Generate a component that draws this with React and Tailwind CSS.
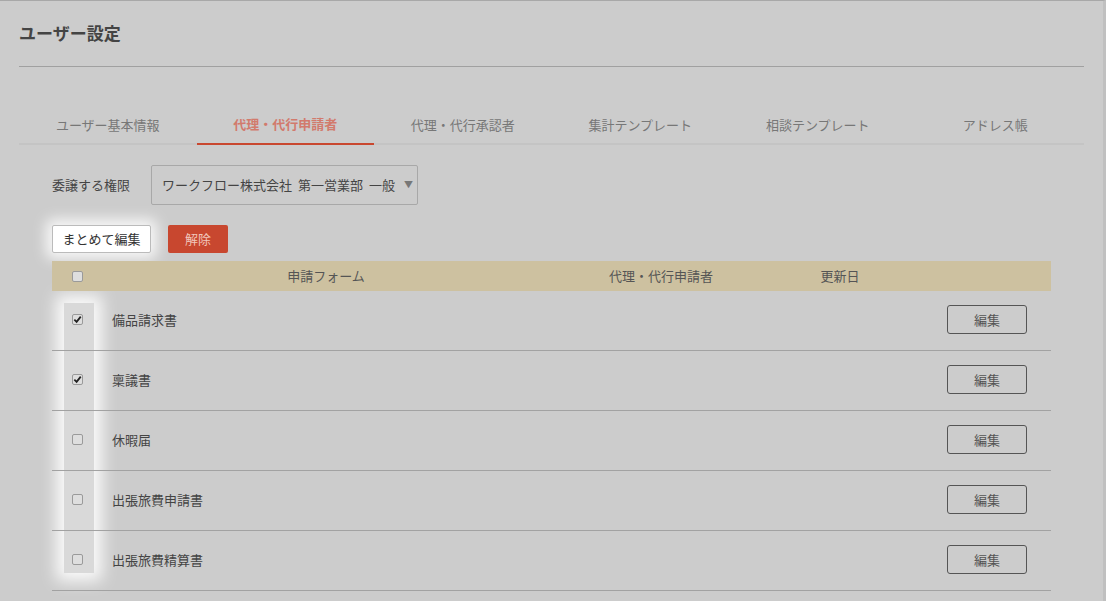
import { useState } from "react";

const tabs = [
  "ユーザー基本情報",
  "代理・代行申請者",
  "代理・代行承認者",
  "集計テンプレート",
  "相談テンプレート",
  "アドレス帳",
];

const forms = [
  { name: "備品請求書", checked: true },
  { name: "稟議書", checked: true },
  { name: "休暇届", checked: false },
  { name: "出張旅費申請書", checked: false },
  { name: "出張旅費精算書", checked: false },
];

const Check = ({ checked }) => (
  <span className="w-[11px] h-[11px] rounded-[2px] border border-[#9a9a9a] bg-[#dedede] flex items-center justify-center">
    {checked && (
      <svg width="9" height="9" viewBox="0 0 10 10">
        <path d="M1.5 5.2 L4 7.6 L8.6 1.8" fill="none" stroke="#222" strokeWidth="2" />
      </svg>
    )}
  </span>
);

export default function App() {
  const [active] = useState(1);

  return (
    <div className="relative min-h-screen bg-[#cccccc] border-t border-[#a8a8a8] border-r-[3px] border-r-[#c0c0c0] font-['Noto_Sans_CJK_JP',sans-serif] text-[#444]">
      <div className="px-[19px]">
        {/* Title */}
        <div className="pt-[21px] pb-[22px] border-b border-[#a0a0a0]">
          <h1 className="text-[17px] leading-[22px] font-bold text-[#444]">ユーザー設定</h1>
        </div>

        {/* Tabs */}
        <div className="mt-[40px] flex border-b-2 border-[#c4c4c4]">
          {tabs.map((t, i) => (
            <div
              key={t}
              className={`flex-1 h-[36px] flex items-center justify-center text-[13px] ${
                i === active
                  ? "-mb-[2px] h-[38px] pb-[2px] border-b-2 border-[#c9472f] text-[#d27a6c] font-bold"
                  : "text-[#777]"
              }`}
            >
              {t}
            </div>
          ))}
        </div>

        <div className="px-[33px]">
          {/* Authority select */}
          <div className="mt-[20px] flex items-center gap-[21px]">
            <span className="text-[13px] text-[#444]">委譲する権限</span>
            <div className="w-[267px] h-[40px] border border-[#a8a8a8] rounded-[2px] flex items-center gap-[6px] pl-[10px] text-[13px] text-[#444]">
              <span>ワークフロー株式会社</span>
              <span>第一営業部</span>
              <span>一般</span>
              <span className="ml-[3px] text-[9px] text-[#777]">▼</span>
            </div>
          </div>

          {/* Action buttons */}
          <div className="mt-[20px] flex gap-[17px]">
            <button className="w-[99px] h-[28px] bg-white border border-[#bbbbbb] rounded-[2px] text-[13px] text-[#333] shadow-[0_0_14px_6px_rgba(255,255,255,0.85)]">
              まとめて編集
            </button>
            <button className="w-[60px] h-[28px] bg-[#c8472f] rounded-[2px] text-[13px] text-[#f1c6bb]">
              解除
            </button>
          </div>

          {/* Table */}
          <div className="mt-[8px] relative">
            <div className="absolute left-[12px] top-[42px] w-[30px] h-[270px] bg-white/25 shadow-[0_0_16px_8px_rgba(255,255,255,0.9)]" />
            <div className="relative grid grid-cols-[50px_448px_222px_136px_1fr] h-[30px] items-center bg-[#cdc1a0] text-[13px] text-[#555]">
              <div className="flex justify-center">
                <Check checked={false} />
              </div>
              <div className="text-center">申請フォーム</div>
              <div className="text-center">代理・代行申請者</div>
              <div className="text-center">更新日</div>
              <div />
            </div>
            {forms.map((f) => (
              <div
                key={f.name}
                className="relative grid grid-cols-[50px_448px_222px_136px_1fr] h-[60px] pb-[2px] items-center border-b border-[#a2a2a2] text-[13px] text-[#444]"
              >
                <div className="flex justify-center">
                  <Check checked={f.checked} />
                </div>
                <div className="pl-[10px]">{f.name}</div>
                <div />
                <div />
                <div className="flex justify-end pr-[24px]">
                  <button className="w-[80px] h-[29px] border border-[#555] rounded-[3px] text-[13px] text-[#555]">
                    編集
                  </button>
                </div>
              </div>
            ))}
          </div>
        </div>
      </div>
    </div>
  );
}
